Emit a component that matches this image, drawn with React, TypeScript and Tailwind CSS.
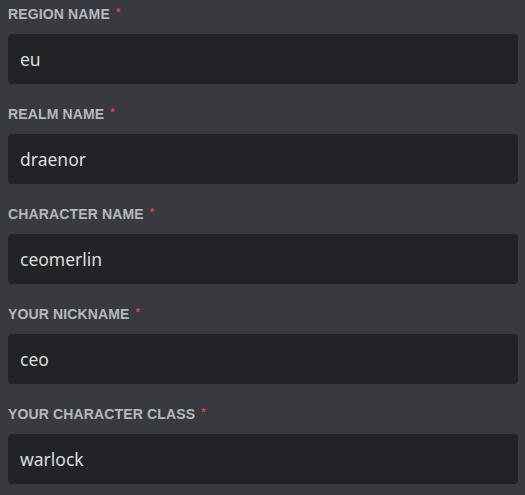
import React from 'react';

const FIELDS = [
  { label: 'Region Name', value: 'eu' },
  { label: 'Realm Name', value: 'draenor' },
  { label: 'Character Name', value: 'ceomerlin' },
  { label: 'Your Nickname', value: 'ceo' },
  { label: 'Your Character Class', value: 'warlock' },
];

export default function App() {
  return (
    <div className="w-[525px] h-[495px] bg-[#393a3f] pl-2 pr-[7px] pt-1 overflow-hidden">
      {FIELDS.map((f) => (
        <div key={f.label} className="mb-5">
          <div className="h-5 mb-[10px] flex items-center font-['Liberation_Sans',Arial,sans-serif] text-[14px] font-bold uppercase tracking-[0.01em] text-[#b5b9be]">
            {f.label}
            <span className="ml-[6px] -mt-[3px] text-[11px] text-[#e5413f]">*</span>
          </div>
          <div className="h-[50px] rounded-[4px] bg-[#222327] px-3 flex items-center font-['Noto_Sans',sans-serif] text-[17.5px] text-[#dcddde]">
            {f.value}
          </div>
        </div>
      ))}
    </div>
  );
}
